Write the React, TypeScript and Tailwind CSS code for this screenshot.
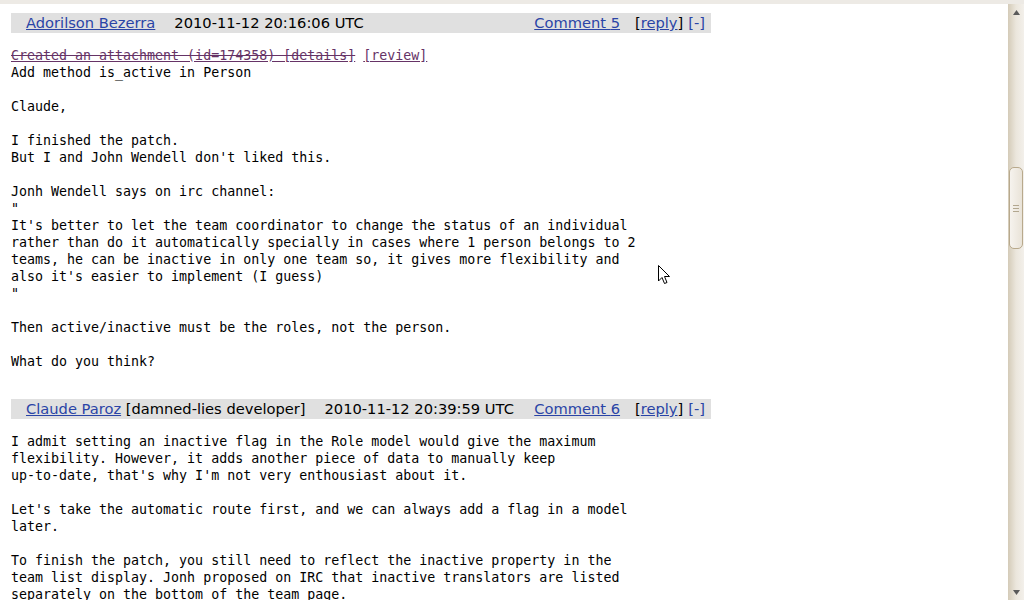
const comment5 = `Add method is_active in Person

Claude,

I finished the patch.
But I and John Wendell don't liked this.

Jonh Wendell says on irc channel:
"
It's better to let the team coordinator to change the status of an individual
rather than do it automatically specially in cases where 1 person belongs to 2
teams, he can be inactive in only one team so, it gives more flexibility and
also it's easier to implement (I guess)
"

Then active/inactive must be the roles, not the person.

What do you think?`;

const comment6 = `I admit setting an inactive flag in the Role model would give the maximum
flexibility. However, it adds another piece of data to manually keep
up-to-date, that's why I'm not very enthousiast about it.

Let's take the automatic route first, and we can always add a flag in a model
later.

To finish the patch, you still need to reflect the inactive property in the
team list display. Jonh proposed on IRC that inactive translators are listed
separately on the bottom of the team page.`;

const mono = "font-['DejaVu_Sans_Mono',monospace] text-[13.3px] leading-[17px] text-black";

const CommentHeader = ({ author, role, date, num }: { author: string; role?: string; date: string; num: number }) => (
  <div className="flex h-[20px] w-[700px] items-center justify-between bg-[#e0e0e0] pl-[15px] pr-[6px] font-['DejaVu_Sans',sans-serif] text-[14.67px] text-black">
    <div className="flex items-center whitespace-pre">
      <a className="text-[#2a44a6] underline">{author}</a>
      {role && <span> {role}</span>}
      <span className="ml-[19px]">{date}</span>
    </div>
    <div className="flex items-center whitespace-pre">
      <a className="text-[#2a44a6] underline">Comment {num}</a>
      <span className="ml-[15px]">[</span>
      <a className="text-[#2a44a6] underline">reply</a>
      <span>]</span>
      <span className="ml-[5px] text-[#2a44a6]">[-]</span>
    </div>
  </div>
);

const Scrollbar = () => (
  <div className="relative flex w-[16px] flex-col bg-gradient-to-r from-[#d4cbb8] via-[#ebe6dc] to-[#f3f0eb]">
    <div className="flex h-[16px] items-center justify-center">
      <svg width="7" height="5" viewBox="0 0 7 5"><path d="M3.5 0 L7 5 L0 5 Z" fill="#5a5a5a" /></svg>
    </div>
    <div className="h-[147px]" />
    <div className="mx-[1px] flex h-[82px] flex-col items-center justify-center gap-[2px] rounded-[5px] border border-[#b8a98c] bg-gradient-to-r from-[#f6f3ee] to-[#e9e3d8]">
      <div className="h-px w-[6px] bg-[#b2a78f]" />
      <div className="h-px w-[6px] bg-[#b2a78f]" />
      <div className="h-px w-[6px] bg-[#b2a78f]" />
    </div>
    <div className="flex-1" />
    <div className="flex h-[16px] items-center justify-center">
      <svg width="7" height="5" viewBox="0 0 7 5"><path d="M0 0 L7 0 L3.5 5 Z" fill="#5a5a5a" /></svg>
    </div>
  </div>
);

export default function App() {
  return (
    <div className="relative flex h-[600px] w-[1024px] flex-col overflow-hidden bg-white">
      <div className="h-[4px] bg-[#edeae5]" />
      <div className="flex flex-1 overflow-hidden">
        <div className="flex-1 overflow-hidden pl-[11px] pt-[9px]">
          <CommentHeader author="Adorilson Bezerra" date="2010-11-12 20:16:06 UTC" num={5} />
          <div className={`${mono} mt-[14px]`}>
            <a className="text-[#663366] [text-decoration-line:underline_line-through]">Created an attachment (id=174358) [details]</a>{' '}
            <a className="text-[#663366] underline">[review]</a>
          </div>
          <pre className={`${mono} m-0`}>{comment5}</pre>
          <div className="h-[29px]" />
          <CommentHeader author="Claude Paroz" role="[damned-lies developer]" date="2010-11-12 20:39:59 UTC" num={6} />
          <pre className={`${mono} mt-[14px]`}>{comment6}</pre>
        </div>
        <Scrollbar />
      </div>
      <svg className="absolute left-[658px] top-[265px]" width="13" height="20" viewBox="0 0 13 20">
        <path d="M0.5 0.5 L0.5 16 L4 12.5 L6.5 18.5 L9 17.5 L6.5 11.5 L11.5 11.5 Z" fill="white" stroke="black" strokeWidth="1" />
      </svg>
    </div>
  );
}
